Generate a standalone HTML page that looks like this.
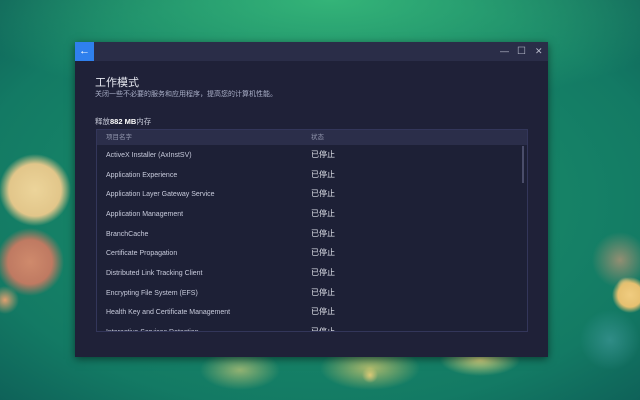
<!DOCTYPE html>
<html><head><meta charset="utf-8"><style>
*{margin:0;padding:0;box-sizing:border-box}
body{width:640px;height:400px;overflow:hidden;position:relative;font-family:"Liberation Sans","Noto Sans CJK SC",sans-serif;
background:
radial-gradient(circle at 35px 190px,#ecd49a 0,#e2c68a 26px,rgba(220,190,120,0) 36px),
radial-gradient(circle at 30px 262px,#cf8a6c 0,#bf7a62 22px,rgba(190,110,90,0) 34px),
radial-gradient(circle at 5px 300px,#e0a070 0,rgba(220,150,100,0) 14px),
radial-gradient(circle at 630px 295px,#f0cc80 0,#e6c070 12px,rgba(220,180,100,0) 18px),
radial-gradient(circle at 620px 260px,rgba(200,150,120,.7) 0,rgba(190,140,110,0) 28px),
radial-gradient(circle at 625px 285px,#f5dc90 0,rgba(240,210,130,0) 8px),
radial-gradient(circle at 610px 340px,rgba(60,150,150,.7) 0,rgba(60,150,150,0) 30px),
radial-gradient(ellipse 40px 20px at 240px 370px,rgba(200,200,120,.7),rgba(200,200,120,0)),
radial-gradient(ellipse 50px 22px at 370px 368px,rgba(210,200,110,.8),rgba(210,200,110,0)),
radial-gradient(ellipse 40px 16px at 480px 360px,rgba(230,220,130,.9),rgba(230,220,130,0)),
radial-gradient(circle at 370px 375px,#e8cc80 0,rgba(230,200,120,0) 8px),
radial-gradient(ellipse 380px 110px at 330px 0px,#34b478,rgba(40,170,110,0)),
radial-gradient(ellipse 500px 300px at 320px 200px,#1c946c,#137a64 70%,#0d5a55);
}
.win{position:absolute;left:75px;top:42px;width:473px;height:315px;background:#1f2138;box-shadow:0 2px 8px rgba(0,0,0,.5)}
.tb{height:19px;background:#2a2d48;position:relative}
.back{position:absolute;left:0;top:0;width:19px;height:19px;background:#2f80ed;color:#fff;font-size:11px;text-align:center;line-height:19px}
.ctl{position:absolute;top:0;height:19px;line-height:19px;color:#b8bbcc;font-size:9px}
h1{position:absolute;left:20px;top:32px;font-size:11px;font-weight:normal;color:#e6e8f0}
.sub{position:absolute;left:20px;top:47px;font-size:7px;color:#aab0c8}
.mem{position:absolute;left:20px;top:74px;font-size:7.5px;color:#c9ccda}
.mem b{color:#fff}
.tbl{position:absolute;left:21px;top:87px;width:432px;height:203px;border:1px solid #33365a;overflow:hidden;background:#1d2036}
.hd{height:15px;background:#2b2e4a;font-size:6.5px;color:#9296ad;line-height:15px;position:relative}
.row{height:19.67px;position:relative;font-size:7px;color:#c8cbdc;line-height:19.67px}
.c1{position:absolute;left:9px;top:1px}
.c2{position:absolute;left:214px;font-size:8px;color:#e0e2ea}
.sb{position:absolute;right:3px;top:16px;width:2px;height:37px;background:#4a4d6a}
</style></head><body>
<div class="win">
<div class="tb"><div class="back">←</div>
<div class="ctl" style="left:425px">—</div><div class="ctl" style="left:442px;font-size:10px">☐</div><div class="ctl" style="left:460px">✕</div></div>
<h1>工作模式</h1>
<div class="sub">关闭一些不必要的服务和应用程序，提高您的计算机性能。</div>
<div class="mem">释放<b>882 MB</b>内存</div>
<div class="tbl">
<div class="hd"><span class="c1" style="top:0">项目名字</span><span class="c2" style="font-size:6.5px;color:#9296ad">状态</span></div>
<div class="row"><span class="c1">ActiveX Installer (AxInstSV)</span><span class="c2">已停止</span></div>
<div class="row"><span class="c1">Application Experience</span><span class="c2">已停止</span></div>
<div class="row"><span class="c1">Application Layer Gateway Service</span><span class="c2">已停止</span></div>
<div class="row"><span class="c1">Application Management</span><span class="c2">已停止</span></div>
<div class="row"><span class="c1">BranchCache</span><span class="c2">已停止</span></div>
<div class="row"><span class="c1">Certificate Propagation</span><span class="c2">已停止</span></div>
<div class="row"><span class="c1">Distributed Link Tracking Client</span><span class="c2">已停止</span></div>
<div class="row"><span class="c1">Encrypting File System (EFS)</span><span class="c2">已停止</span></div>
<div class="row"><span class="c1">Health Key and Certificate Management</span><span class="c2">已停止</span></div>
<div class="row"><span class="c1">Interactive Services Detection</span><span class="c2">已停止</span></div>
<div class="sb"></div>
</div>
</div>
</body></html>
